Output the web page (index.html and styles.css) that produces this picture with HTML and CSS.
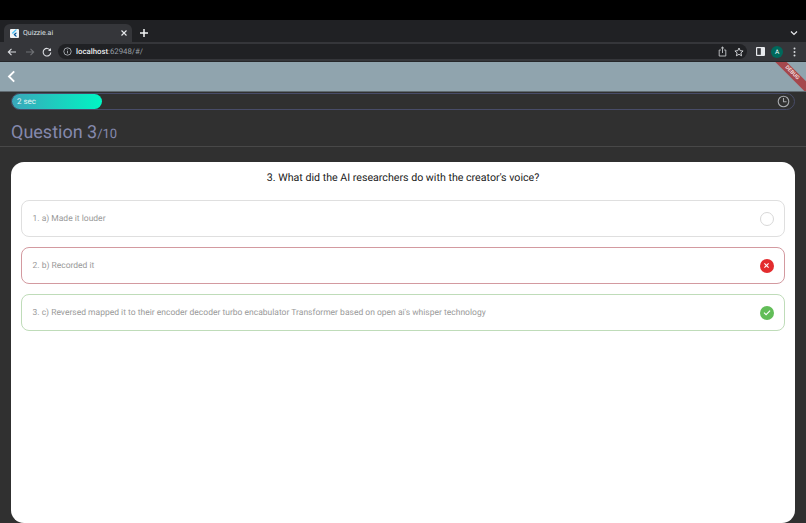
FILE: index.html
```html
<!DOCTYPE html>
<html lang="en">
<head>
<meta charset="utf-8">
<title>Quizzie.ai</title>
<link rel="stylesheet" href="styles.css">
</head>
<body>
<div class="letterbox"></div>
<div class="tabstrip">
  <div class="tab">
    <span class="favicon"><svg width="10" height="10" viewBox="0 0 10 10"><path d="M6 1 2 5l1.200 1.200L8 1z" fill="#4fc3f7"/><path d="M6 4.600 3.900 6.800 6 9h2L5.900 6.800 8 4.600z" fill="#01579b"/></svg></span>
    <span class="tab-title">Quizzie.ai</span>
    <svg class="tab-close" width="8" height="8" viewBox="0 0 8 8"><path d="M1.500 1.500l5 5M6.500 1.500l-5 5" stroke="#e8eaed" stroke-width="1.100"/></svg>
  </div>
  <svg class="new-tab" width="10" height="10" viewBox="0 0 10 10"><path d="M5 1v8M1 5h8" stroke="#f1f3f4" stroke-width="1.500"/></svg>
  <svg class="tab-menu" width="8" height="6" viewBox="0 0 8 6"><path d="M1 1.500l3 3 3-3" fill="none" stroke="#e8eaed" stroke-width="1.200"/></svg>
</div>
<div class="toolbar">
  <svg class="tool" width="10" height="10" viewBox="0 0 10 10"><path d="M9 5H1.500M4.500 1.800 1.300 5l3.200 3.200" fill="none" stroke="#dadce0" stroke-width="1.100"/></svg>
  <svg class="tool" width="10" height="10" viewBox="0 0 10 10"><path d="M1 5h7.500M5.500 1.800 8.700 5 5.500 8.200" fill="none" stroke="#6f7175" stroke-width="1.100"/></svg>
  <svg class="tool tool-last" width="10" height="10" viewBox="0 0 10 10"><path d="M8.300 3.300A3.800 3.800 0 1 0 8.800 5.500" fill="none" stroke="#dadce0" stroke-width="1.100"/><path d="M9 .9v3H6z" fill="#dadce0"/></svg>
  <div class="omnibox">
    <svg width="9" height="9" viewBox="0 0 9 9"><circle cx="4.500" cy="4.500" r="3.700" fill="none" stroke="#bdc1c6" stroke-width=".8"/><path d="M4.500 4v2.400M4.500 2.400v.9" stroke="#bdc1c6" stroke-width=".8"/></svg>
    <span class="url"><b>localhost</b>:62948/#/</span>
    <svg class="omni-end" width="9" height="11" viewBox="0 0 9 11"><path d="M2.800 4H1.200v6h6.600V4H6.200M4.500 7V1M2.900 2.500 4.500 1l1.600 1.500" fill="none" stroke="#c4c7cb" stroke-width=".9"/></svg>
    <svg class="star" width="10" height="10" viewBox="0 0 10 10"><path d="M5 1l1.200 2.700 2.900.3-2.200 1.900.7 2.900L5 7.300 2.400 8.800l.7-2.900L.9 4l2.900-.3z" fill="none" stroke="#dadce0" stroke-width=".9"/></svg>
  </div>
  <svg class="panel" width="9" height="9" viewBox="0 0 9 9"><rect width="9" height="9" rx="1" fill="#e8eaed"/><rect x="1.200" y="1.200" width="3.600" height="6.600" fill="#35363a"/></svg>
  <span class="avatar">A</span>
  <svg class="kebab" width="3" height="10" viewBox="0 0 3 10"><circle cx="1.500" cy="1.500" r="1" fill="#dadce0"/><circle cx="1.500" cy="5" r="1" fill="#dadce0"/><circle cx="1.500" cy="8.500" r="1" fill="#dadce0"/></svg>
</div>
<div class="app">
  <header class="appbar">
    <svg width="9" height="13" viewBox="0 0 9 13"><path d="M7.200 1.300 2 6.500l5.200 5.200" fill="none" stroke="#fff" stroke-width="1.900"/></svg>
    <div class="debug"><span>DEBUG</span></div>
  </header>
  <div class="timer-wrap">
    <div class="timer">
      <div class="timer-fill">2 sec</div>
      <svg class="clock" width="13" height="13" viewBox="0 0 13 13"><circle cx="6.500" cy="6.500" r="5.300" fill="none" stroke="#a7a9ad" stroke-width="1.100"/><path d="M6.500 3v3.700h3" fill="none" stroke="#a7a9ad" stroke-width="1.100"/></svg>
    </div>
  </div>
  <h1 class="question-count">Question 3<small>/10</small></h1>
  <div class="rule"></div>
  <main class="card">
    <h2 class="prompt">3. What did the AI researchers do with the creator's voice?</h2>
    <div class="option">
      <span>1. a) Made it louder</span>
      <span class="mark mark-empty"></span>
    </div>
    <div class="option option-wrong">
      <span>2. b) Recorded it</span>
      <span class="mark mark-wrong"><svg width="9" height="9" viewBox="0 0 9 9"><path d="M2.400 2.400l4.200 4.200M6.600 2.400 2.400 6.600" stroke="#fff" stroke-width="1.100"/></svg></span>
    </div>
    <div class="option option-right">
      <span>3. c) Reversed mapped it to their encoder decoder turbo encabulator Transformer based on open ai's whisper technology</span>
      <span class="mark mark-right"><svg width="10" height="9" viewBox="0 0 10 9"><path d="M2 4.700l2.100 2 4-4.100" fill="none" stroke="#fff" stroke-width="1.100"/></svg></span>
    </div>
  </main>
</div>
</body>
</html>
```
FILE: styles.css
```css
* { box-sizing: border-box; }
html, body { height: 100%; }
body {
  margin: 0;
  display: flex;
  flex-direction: column;
  height: 523px;
  overflow: hidden;
  background: #000;
  font-family: Roboto, "Liberation Sans", sans-serif;
  text-rendering: geometricPrecision;
}
.letterbox { height: 20px; flex: none; background: #000; }
.tabstrip {
  height: 22px;
  flex: none;
  display: flex;
  align-items: flex-end;
  padding-left: 4px;
  background: #202124;
}
.tab {
  width: 128px;
  height: 18px;
  display: flex;
  align-items: center;
  padding: 0 4px 0 6px;
  background: #35363a;
  border-radius: 6px 6px 0 0;
}
.favicon {
  width: 9px;
  height: 9px;
  display: flex;
  align-items: center;
  justify-content: center;
  background: #f1f3f4;
  border-radius: 1px;
  overflow: hidden;
}
.tab-title { margin-left: 4px; flex: 1; color: #dfe1e5; font-size: 7px; }
.new-tab { margin: 0 0 4px 7px; }
.tab-menu { margin: 0 8px 6px auto; }
.toolbar {
  height: 20px;
  flex: none;
  display: flex;
  align-items: center;
  padding-left: 7px;
  background: #35363a;
  border-bottom: 1px solid #26272a;
}
.tool { margin-right: 7.500px; flex: none; }
.tool-last { margin-right: 6px; }
.omnibox {
  width: 689px;
  height: 15px;
  flex: none;
  display: flex;
  align-items: center;
  padding: 0 3px 0 5px;
  background: #202124;
  border-radius: 8px;
}
.url { margin-left: 4px; color: #9aa0a6; font-size: 7.800px; flex: 1; }
.url b { color: #e8eaed; font-weight: 500; }
.omni-end { margin-right: 7.500px; }
.panel { margin-left: 8.500px; flex: none; }
.avatar {
  width: 12px;
  height: 12px;
  margin-left: 6.500px;
  display: flex;
  align-items: center;
  justify-content: center;
  flex: none;
  background: #00695c;
  border-radius: 50%;
  color: #fff;
  font-size: 6.500px;
}
.kebab { margin-left: 9.500px; flex: none; }
.app {
  flex: 1;
  min-height: 0;
  display: flex;
  flex-direction: column;
  background: #303030;
}
.appbar {
  position: relative;
  height: 30px;
  flex: none;
  display: flex;
  align-items: center;
  padding-left: 7px;
  overflow: hidden;
  background: #90a4ae;
  border-bottom: 1px solid #606a70;
}
.debug {
  position: absolute;
  top: 7px;
  right: -14px;
  width: 56px;
  height: 8px;
  display: flex;
  align-items: center;
  justify-content: center;
  background: #a5474c;
  transform: rotate(45deg);
  color: #f3d9da;
  font-size: 5.500px;
  font-weight: 700;
}
.timer-wrap { height: 18px; flex: none; padding: 1px 11px 0; }
.timer {
  height: 17px;
  display: flex;
  align-items: center;
  justify-content: space-between;
  padding-right: 4px;
  border: 1px solid #484c68;
  border-radius: 9px;
}
.timer-fill {
  width: 90px;
  height: 15px;
  display: flex;
  align-items: center;
  padding-left: 5px;
  background: linear-gradient(90deg, #3aa6ba, #00f5c4);
  border-radius: 8px;
  color: #e6f5f5;
  font-size: 8px;
}
.question-count {
  margin: 0;
  height: 36px;
  flex: none;
  padding: 10.500px 0 0 11px;
  color: #8589ad;
  font-size: 18px;
  font-weight: 400;
  line-height: 24px;
}
.question-count small { font-size: 13px; }
.rule { height: 1px; flex: none; background: #484848; }
.card {
  flex: 1;
  min-height: 0;
  margin: 15px 11px 0;
  padding: 9px 10px 0;
  background: #fff;
  border-radius: 13px;
}
.prompt {
  margin: 0 0 15px;
  color: #1a1a1a;
  font-size: 10.650px;
  font-weight: 400;
  line-height: 14px;
  text-align: center;
}
.option {
  height: 37px;
  margin-bottom: 10px;
  display: flex;
  align-items: center;
  justify-content: space-between;
  padding: 0 10.500px 0 10.500px;
  border: 1px solid #dfdfdf;
  border-radius: 8px;
  color: #9a9a9a;
  font-size: 8.500px;
}
.option-wrong { border-color: #d39aa0; }
.option-right { border-color: #bfdcb9; }
.mark {
  width: 14px;
  height: 14px;
  display: flex;
  align-items: center;
  justify-content: center;
  flex: none;
  border-radius: 50%;
}
.mark-empty { border: 1px solid #d8d8d8; }
.mark-wrong { background: #e32c2e; }
.mark-right { background: #62bd58; }
```
